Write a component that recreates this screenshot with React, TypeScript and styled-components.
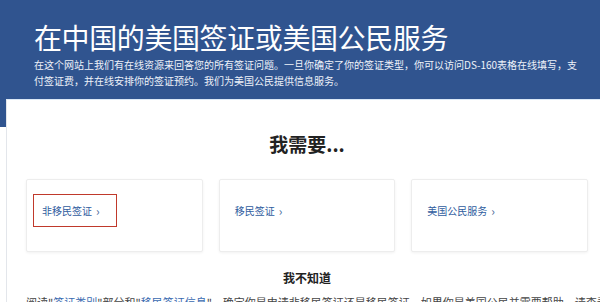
import React from 'react';
import styled, { createGlobalStyle } from 'styled-components';

const GlobalStyle = createGlobalStyle`
	html, body {
		margin: 0;
		padding: 0;
		background: #fff;
		overflow: hidden;
	}
	body {
		font-family: 'Noto Sans CJK SC', 'Noto Sans', sans-serif;
	}
`;

const options = [
	{ text: '非移民签证', highlighted: true },
	{ text: '移民签证', highlighted: false },
	{ text: '美国公民服务', highlighted: false },
];

export default function App() {
	return (
		<>
			<GlobalStyle />
			<Page>
				<Hero>
					<Title>在中国的美国签证或美国公民服务</Title>
					<Intro>
						在这个网站上我们有在线资源来回答您的所有签证问题。一旦你确定了你的签证类型，你可以访问DS-160表格在线填写，支付签证费，并在线安排你的签证预约。我们为美国公民提供信息服务。
					</Intro>
				</Hero>
				<Panel>
					<Heading>我需要...</Heading>
					<CardRow>
						{options.map((opt) => (
							<Card key={opt.text}>
								<LinkBox $highlighted={opt.highlighted}>
									<CardLink href="#">
										{opt.text}
										<Chevron>›</Chevron>
									</CardLink>
								</LinkBox>
							</Card>
						))}
					</CardRow>
					<SubHeading>我不知道</SubHeading>
					<Note>
						阅读"<InlineLink href="#">签证类别</InlineLink>"部分和"
						<InlineLink href="#">移民签证信息</InlineLink>"，确定你是申请非移民签证还是移民签证。如果你是美国公民并需要帮助，请查看
						<InlineLink href="#">美国公民服务中心</InlineLink>。
					</Note>
				</Panel>
			</Page>
		</>
	);
}

const Page = styled.div`
	width: 600px;
	height: 302px;
	overflow: hidden;
	background: #fff;
`;

const Hero = styled.header`
	height: 127px;
	box-sizing: border-box;
	padding: 19px 0 0 34px;
	background: #30548f;
	color: #fff;
`;

const Title = styled.h1`
	margin: 0;
	font-size: 28px;
	line-height: 36px;
	font-weight: 400;
	letter-spacing: -0.4px;
	white-space: nowrap;
`;

const Intro = styled.p`
	margin: 2px 0 0;
	max-width: 545px;
	font-size: 10px;
	line-height: 16px;
	color: #eef2f9;
`;

const Panel = styled.main`
	margin: -28px 0 0 6px;
	height: 240px;
	box-sizing: border-box;
	padding: 32px 12px 0 19px;
	background: #fff;
	border-left: 1px solid #e3e6eb;
	border-top: 1px solid #dbe8f6;
`;

const Heading = styled.h2`
	margin: 0;
	text-align: center;
	font-size: 19px;
	line-height: 24px;
	font-weight: 700;
	color: #222;
`;

const CardRow = styled.div`
	display: grid;
	grid-template-columns: repeat(3, 1fr);
	gap: 16px;
	margin-top: 23px;
`;

const Card = styled.div`
	height: 73px;
	box-sizing: border-box;
	padding: 14px 0 0 6px;
	border: 1px solid #ededed;
	border-radius: 2px;
	box-shadow: 0 1px 3px rgba(0, 0, 0, 0.06);
	background: #fff;
`;

const LinkBox = styled.div<{ $highlighted: boolean }>`
	display: inline-flex;
	align-items: center;
	height: 33px;
	box-sizing: border-box;
	padding: 0 16px 0 8px;
	border: 1px solid ${(p) => (p.$highlighted ? '#c0392b' : 'transparent')};
`;

const CardLink = styled.a`
	display: inline-flex;
	align-items: center;
	gap: 4px;
	font-size: 10px;
	color: #2f5c9e;
	text-decoration: none;
`;

const Chevron = styled.span`
	font-size: 12px;
	line-height: 1;
	color: #4a6a99;
`;

const SubHeading = styled.h3`
	margin: 17px 0 0;
	text-align: center;
	font-size: 12px;
	line-height: 18px;
	font-weight: 700;
	color: #222;
`;

const Note = styled.p`
	margin: 6px 0 0;
	text-align: center;
	font-size: 11px;
	line-height: 18px;
	color: #444;
	white-space: nowrap;
`;

const InlineLink = styled.a`
	color: #3a6ab0;
	text-decoration: none;
`;
